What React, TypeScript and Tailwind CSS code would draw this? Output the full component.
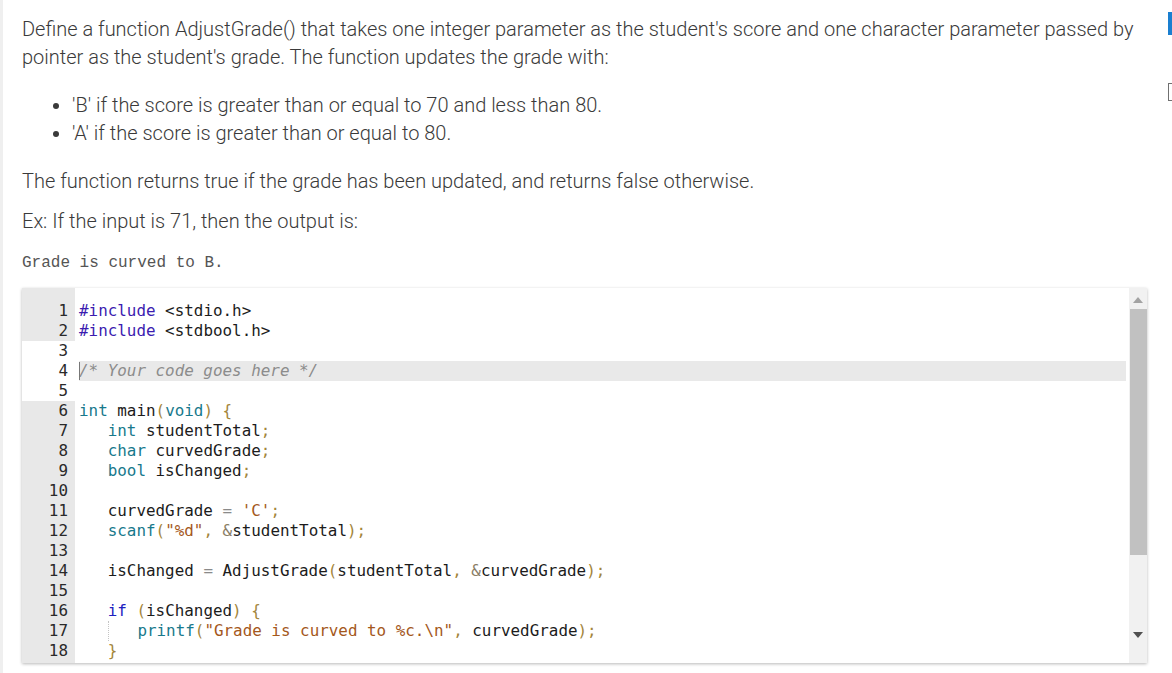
import React from "react";

type Tok = [string, string?];

const C = {
  meta: "text-[#3c1cb0]",
  type: "text-[#18798c]",
  kw: "text-[#2020c0]",
  punc: "text-[#a3853b]",
  str: "text-[#a4581c]",
  op: "text-[#8a8a8a]",
  amp: "text-[#8a7e66]",
  com: "text-[#8c8c8c] italic",
  fn: "text-[#18798c]",
};

const code: Tok[][] = [
  [["#include", C.meta], [" <stdio.h>"]],
  [["#include", C.meta], [" <stdbool.h>"]],
  [],
  [["/* Your code goes here */", C.com]],
  [],
  [["int", C.type], [" main"], ["(", C.punc], ["void", C.type], [")", C.punc], [" "], ["{", C.punc]],
  [["   "], ["int", C.type], [" studentTotal"], [";", C.punc]],
  [["   "], ["char", C.type], [" curvedGrade"], [";", C.punc]],
  [["   "], ["bool", C.type], [" isChanged"], [";", C.punc]],
  [],
  [["   curvedGrade "], ["=", C.op], [" "], ["'C'", C.str], [";", C.punc]],
  [["   "], ["scanf", C.fn], ["(", C.punc], ['"%d"', C.str], [",", C.punc], [" "], ["&", C.amp], ["studentTotal"], [")", C.punc], [";", C.punc]],
  [],
  [["   isChanged "], ["=", C.op], [" AdjustGrade"], ["(", C.punc], ["studentTotal"], [",", C.punc], [" "], ["&", C.amp], ["curvedGrade"], [")", C.punc], [";", C.punc]],
  [],
  [["   "], ["if", C.kw], [" "], ["(", C.punc], ["isChanged"], [")", C.punc], [" "], ["{", C.punc]],
  [["   "], ["GUIDE"], ["   "], ["printf", C.fn], ["(", C.punc], ['"Grade is curved to %c.\\n"', C.str], [",", C.punc], [" curvedGrade"], [")", C.punc], [";", C.punc]],
  [["   "], ["}", C.punc]],
];

// gutter lines 3-5 are the editable region, shown white
const editable = (n: number) => n >= 3 && n <= 5;

const UpArrow = () => (
  <svg width="10" height="6" viewBox="0 0 10 6">
    <path d="M5 0 L10 6 L0 6 Z" fill="#a3a3a3" />
  </svg>
);

const DownArrow = () => (
  <svg width="10" height="6" viewBox="0 0 10 6">
    <path d="M0 0 L10 0 L5 6 Z" fill="#505050" />
  </svg>
);

const Editor = () => {
  return (
    <div className="mt-[13px] w-[1125px] h-[375px] flex bg-white overflow-hidden shadow-[0_1px_3px_rgba(0,0,0,0.28)] font-['DejaVu_Sans_Mono',monospace] text-[15.9px] leading-[20px] text-[#1c1c1c]">
      {/* gutter */}
      <div className="w-[53px] flex flex-col shrink-0">
        <div className="h-[13px] bg-[#e8e8e8] shrink-0" />
        {code.map((_, i) => (
          <div
            key={i}
            className={`h-[20px] shrink-0 text-right pr-[7px] text-[#2a2a2a] ${
              editable(i + 1) ? "bg-white" : "bg-[#e8e8e8]"
            }`}
          >
            {i + 1}
          </div>
        ))}
        <div className="flex-1 bg-[#e8e8e8]" />
      </div>

      {/* code */}
      <div className="flex-1 flex flex-col pl-1 pr-[3px] pt-[13px]">
        {code.map((line, i) => (
          <div
            key={i}
            className={`h-[20px] shrink-0 whitespace-pre relative ${
              i === 3 ? "bg-[#e9e9e9]" : ""
            }`}
          >
            {i === 3 && (
              <span className="absolute left-0 top-[1px] h-[18px] w-px bg-[#777]" />
            )}
            {line.map(([t, cls], j) =>
              t === "GUIDE" ? (
                <span
                  key={j}
                  className="inline-block h-[20px] w-0 align-top border-l border-dotted border-[#c4c4c4]"
                />
              ) : (
                <span key={j} className={cls}>
                  {t}
                </span>
              )
            )}
            {line.length === 0 && " "}
          </div>
        ))}
      </div>

      {/* scrollbar */}
      <div className="w-[18px] shrink-0 bg-[#f1f1f1] flex flex-col items-center">
        <div className="h-[21px] flex items-center justify-center pt-[2px]">
          <UpArrow />
        </div>
        <div className="w-[17px] h-[246px] bg-[#c1c1c1]" />
        <div className="flex-1" />
        <div className="h-[24px] flex items-start justify-center pt-[1px] mb-[8px]">
          <DownArrow />
        </div>
      </div>
    </div>
  );
};

export default function App() {
  return (
    <div className="flex w-[1172px] min-h-[673px] bg-white overflow-hidden">
      <div className="w-[3px] shrink-0 bg-[#efefef]" />

      <div className="w-[1144px] shrink-0 pl-[19px] pt-[15px] font-['Roboto',sans-serif] font-light text-[20px] leading-[28px] text-[#3a3a3a]">
        <p>
          Define a function AdjustGrade() that takes one integer parameter as
          the student's score and one character parameter passed by pointer as
          the student's grade. The function updates the grade with:
        </p>
        <ul className="mt-[20px] pl-[50px] list-disc">
          <li>'B' if the score is greater than or equal to 70 and less than 80.</li>
          <li>'A' if the score is greater than or equal to 80.</li>
        </ul>
        <p className="mt-[20px]">
          The function returns true if the grade has been updated, and returns
          false otherwise.
        </p>
        <p className="mt-[12px]">Ex: If the input is 71, then the output is:</p>
        <pre className="mt-[16px] font-['Liberation_Mono',monospace] text-[16px] leading-[24px] text-[#555]">
          Grade is curved to B.
        </pre>
        <Editor />
      </div>

      <div className="flex-1 pl-[21px] flex flex-col">
        <div className="mt-[12px] h-[23px] w-[4px] bg-[#1a7fd0]" />
        <div className="mt-[48px] h-[18px] w-[4px] border-l border-t border-b border-[#707070]" />
      </div>
    </div>
  );
}
